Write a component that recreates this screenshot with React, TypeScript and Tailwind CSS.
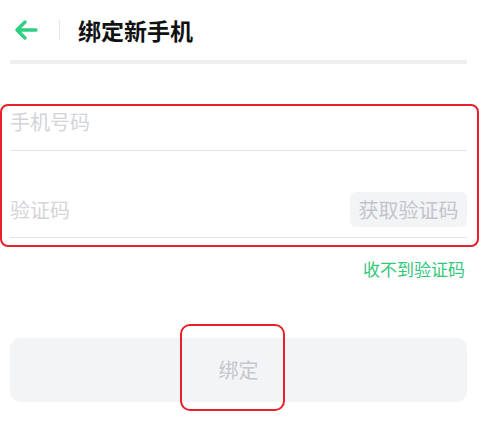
const font = { fontFamily: '"Noto Sans CJK SC", "Noto Sans", sans-serif' };

const BackArrow = () => (
    <svg width="24" height="20" viewBox="0 0 24 20" fill="none">
        <path
            d="M22 10H3M11 2L3 10L11 18"
            stroke="#2fcf82"
            strokeWidth="3.4"
            strokeLinecap="round"
            strokeLinejoin="round"
        />
    </svg>
);

export default function App() {
    return (
        <div className="relative w-[479px] h-[427px] bg-white overflow-hidden" style={font}>
            {/* header */}
            <header className="flex items-center h-[60px] pl-[14px]">
                <BackArrow />
                <div className="ml-[21px] w-px h-[20px] bg-[#e6e6e6]" />
                <h1 className="ml-[18px] text-[23px] leading-[30px] font-bold text-[#111]">绑定新手机</h1>
            </header>
            <div className="ml-[10px] mr-[12px] h-[4px] bg-[#efefef]" />

            {/* form */}
            <div className="mt-[40px] border-2 border-[#e8202a] rounded-[8px] pl-[8px] pr-[10px] pb-[7px]">
                <div className="h-[45px] border-b border-[#e4e4e7]">
                    <input
                        placeholder="手机号码"
                        className="w-full pt-[2px] text-[20px] leading-[28px] text-[#333] placeholder:text-[#d4d4d8] outline-none bg-transparent"
                    />
                </div>
                <div className="flex items-center justify-between h-[87px] pt-[41px] pb-[10px] border-b border-[#e4e4e7]">
                    <input
                        placeholder="验证码"
                        className="flex-1 text-[20px] leading-[28px] text-[#333] placeholder:text-[#d4d4d8] outline-none bg-transparent"
                    />
                    <button className="w-[117px] h-[35px] rounded-[6px] bg-[#f3f4f6] text-[20px] leading-[28px] text-[#c3c4cb]">
                        获取验证码
                    </button>
                </div>
            </div>

            <div className="flex justify-end pr-[14px] mt-[10px]">
                <span className="text-[17px] leading-[24px] text-[#34c77b]">收不到验证码</span>
            </div>

            <button className="mt-[57px] mx-[10px] w-[457px] h-[64px] rounded-[10px] bg-[#f3f4f6] text-[20px] leading-[28px] text-[#c5c6cd]">
                绑定
            </button>

            {/* highlight */}
            <div className="absolute left-[180px] top-[324px] w-[105px] h-[87px] border-2 border-[#e8202a] rounded-[10px]" />
        </div>
    );
}
